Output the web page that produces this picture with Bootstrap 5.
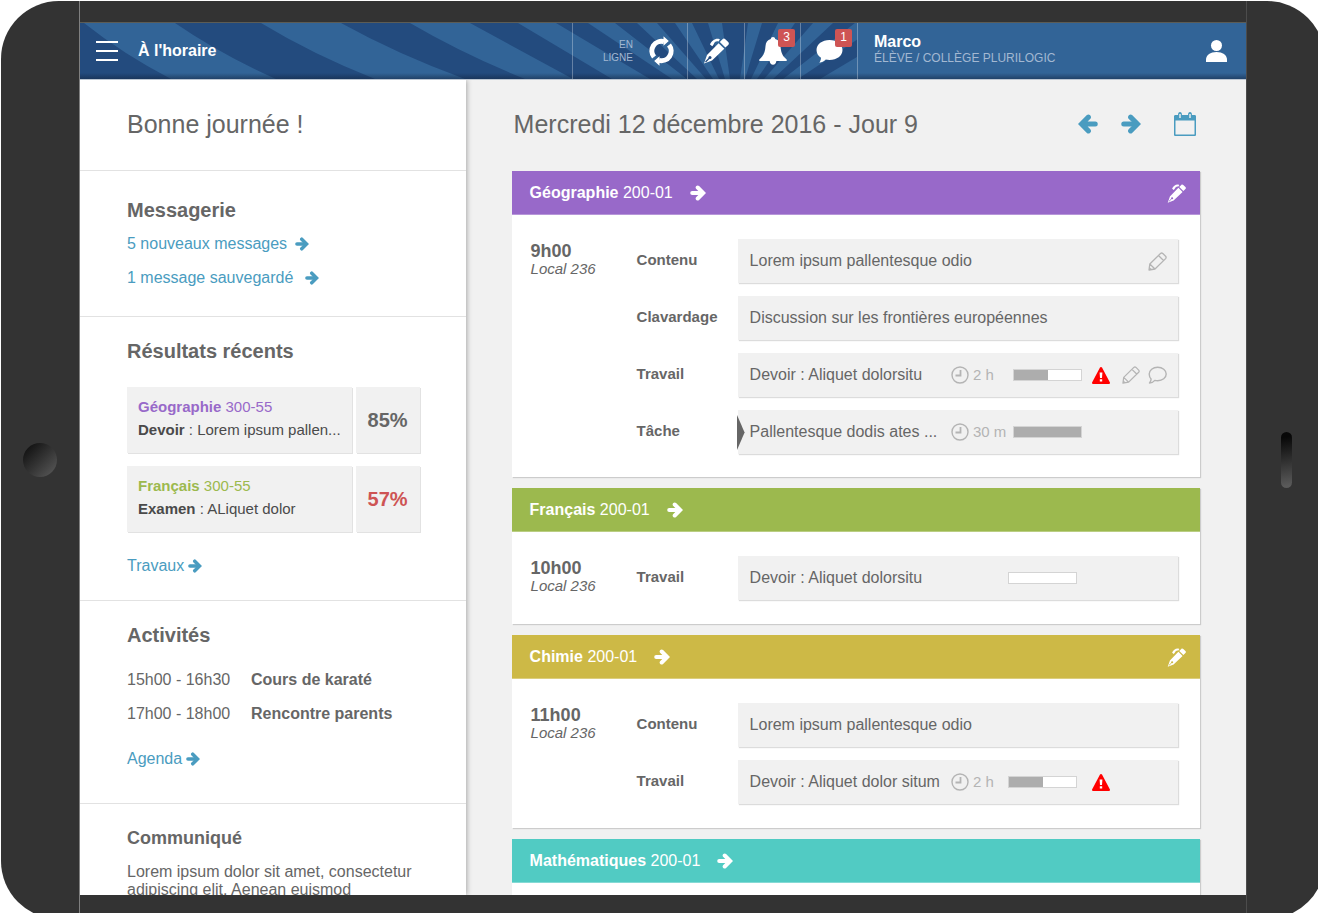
<!DOCTYPE html>
<html lang="fr">
<head>
<meta charset="utf-8">
<meta name="viewport" content="width=device-width, initial-scale=1">
<title>À l'horaire</title>
<link href="https://cdn.jsdelivr.net/npm/bootstrap@5.3.0/dist/css/bootstrap.min.css" rel="stylesheet">
<style>
  :root {
    --ink: #666;
    --accent: #4a9cc0;
    --panel: #f1f1f1;
    --line: #e2e2e2;
    --blue: #326497;
    --navy: #234b7e;
    --footshade: linear-gradient(to top, rgba(16, 32, 58, .5), transparent 6px);
  }
  body {
    font-family: "Liberation Sans", Arial, sans-serif;
    font-size: 16px;
    line-height: 24px;
    color: var(--ink);
    background: #fff;
    height: 100vh;
    overflow: hidden;
  }
  a { color: var(--accent); text-decoration: none; }
  h1, h2, h3, p { margin: 0; }
  svg { display: block; flex-shrink: 0; }

  /* Tablet frame */
  .tablet {
    height: calc(100vh + 5px);
    margin: 1px -7px 0 1px;
    background: #333;
    border-radius: 58px;
    overflow: hidden;
  }
  .bezel { flex: 0 0 78px; }
  .home-key { width: 34px; height: 34px; border-radius: 50%; background: linear-gradient(135deg, #111 10%, #585858 95%); }
  .side-key { width: 11px; height: 56px; border-radius: 6px; background: linear-gradient(170deg, #080808 10%, #5a5a5a 95%); }
  .device { border-left: 1px solid #808080; border-right: 1px solid #4c4c4c; padding: 21px 0 24px; min-width: 0; }
  .screen { border-top: 1px solid #5c5c55; background: var(--panel); min-height: 0; }

  /* Top bar */
  .topbar {
    height: 57px;
    flex-shrink: 0;
    color: #fff;
    border-bottom: 1px solid #bcc6d2;
    background:
      var(--footshade),
      url("data:image/svg+xml,%3Csvg xmlns='http://www.w3.org/2000/svg' width='1166' height='56'%3E%3Cpath fill='%23326497' d='M0 0H1166V56H0z'/%3E%3Cpath fill='%23234b7e' d='M0 0H4Q43 31 91 56H0zM95 0H181Q232 31 295 56H196Q140 31 95 0zM261 0H330Q383 31 445 56H385Q317 31 261 0zM390 0H438L532 56H493zM476 0H508L592 56H570zM535 0H557L617 56H607zM577 0H595L633 56H626zM612 0H628L645 56H639zM642 0H668L660 56H650zM682 0H698L671 56H665zM715 0H733L684 56H677zM753 0H775L703 56H693zM802 0H834L740 56H718zM872 0H920L820 56H778z'/%3E%3C/svg%3E") right top no-repeat,
      var(--navy);
  }
  .topbar button { background: none; border: 0; color: #fff; padding: 0; }
  .bar-cell { border-left: 1px solid rgba(255, 255, 255, .3) !important; }
  .status { flex: 0 0 115px; padding-right: 13px !important; gap: 16px; font-size: 10px; line-height: 13px; }
  .status span, .user small { color: #a3b8d2; }
  .tool { flex: 0 0 57px; position: relative; }
  .tool-bell { flex-basis: 56px; }
  .count {
    position: absolute; top: 6px; right: 5px; width: 17px; height: 18px;
    font-size: 12px; line-height: 17px; text-align: center; background: #ce5454; border-radius: 2px;
  }
  .user { flex: 0 0 389px; padding: 0 19px 0 16px; background: var(--footshade), var(--blue); line-height: 16px; }
  .user small { font-size: 12px; }
  .user-name { padding-bottom: 2px; }

  /* Left column */
  .aside-col { flex: 0 0 385px; background: #fff; box-shadow: 1px 0 5px rgba(0, 0, 0, .3); }
  .block { padding: 22px 46px 22px 47px; border-bottom: 1px solid var(--line); }
  .greeting { padding: 31px 47px 33px; }
  .title { font-size: 25px; line-height: 26px; font-weight: 400; }
  .block h2 { font-size: 20px; line-height: 24px; font-weight: 700; }
  .block h3 { font-size: 18px; line-height: 24px; font-weight: 700; }
  .inbox { padding-top: 27px; padding-bottom: 26px; }
  .agenda { padding-bottom: 32px; }
  .agenda .stack { padding: 21px 0; }
  .stack { display: grid; row-gap: 10px; }
  .saved { gap: 12px; }
  .tile { background: var(--panel); box-shadow: 1px 1px 0 0 #e2e2e2; height: 66px; }
  .result { font-size: 15px; line-height: 23px; gap: 4px; }
  .result + .result { margin-top: 13px; }
  .result-text { padding: 8px 11px; color: #4a4a4a; }
  .score { flex: 0 0 64px; font-size: 20px; font-weight: 700; }
  .more { margin-top: 22px; }
  .hours { flex: 0 0 124px; }
  .notice { line-height: 18px; padding-top: 13px; }

  /* Schedule */
  .day { padding: 0 46px; }
  .day-head { height: 91px; padding: 0 4px 3px 2px; }
  .day-head button { border: 0; background: none; padding: 0; color: var(--accent); }
  .next-day { margin: 0 33px 0 23px; }
  .course { background: #fff; margin-bottom: 11px; box-shadow: 1px 1px 1px #ccc; }
  .course + .course { padding-bottom: 1px; }
  .course-head { height: 44px; padding: 0 14px 0 18px; gap: 17px; color: #fff; box-shadow: inset 0 -1px rgba(255, 255, 255, .3); }
  .course-head a, .course-head button { color: #fff; background: none; border: 0; padding: 0; }
  .geo { background: #9869c9; }
  .fra { background: #9cb94e; }
  .chi { background: #cdb946; }
  .mat { background: #51cbc3; }
  .course-body { padding: 24px 22px 22px 19px; }
  .slot-time { flex: 0 0 106px; line-height: 18px; padding-top: 3px; }
  .slot-time b { font-size: 18px; }
  .slot-time i { font-size: 15px; }
  .slots { display: grid; row-gap: 12px; }
  .kind { flex: 0 0 101px; font-size: 15px; font-weight: 700; line-height: 42px; }
  .entry {
    position: relative; height: 44px; padding: 0 11px 0 12px; background: var(--panel);
    box-shadow: 1px 1px 1px #dcdcdc; display: grid; align-items: center;
    grid-template-columns: minmax(0, 1fr) auto; margin-bottom: 1px;
  }
  .entry > span:first-child { line-height: 42px; white-space: nowrap; }
  .task { grid-template-columns: minmax(0, 1fr) 62px 79px 75px; }
  .task-b { grid-template-columns: minmax(0, 1fr) 57px 84px 75px; }
  .soft { color: #b4b4b4; }
  .span-time { font-size: 15px; gap: 4px; }
  .meter { width: 69px; height: 12px; border: 1px solid #d4d4d4; border-radius: 0; background: #fff; }
  .meter .progress-bar { background: #adadad; }
  .current::before {
    content: ""; position: absolute; left: -1px; top: 4px; width: 8px; height: 37px;
    background: #666; clip-path: polygon(0 0, 100% 50%, 0 100%);
  }
</style>
</head>
<body>
<svg width="0" height="0" class="position-absolute" aria-hidden="true">
  <symbol id="arrow" viewBox="0 0 16 16">
    <path d="M2.200 8H12" fill="none" stroke="currentColor" stroke-width="4" stroke-linecap="round"/>
    <path d="M7.700 2.500 13.200 8l-5.500 5.500" fill="none" stroke="currentColor" stroke-width="4" stroke-linecap="round"/>
  </symbol>
  <symbol id="pen" viewBox="0 0 26 26">
    <path fill="currentColor" d="M19.500 1.200c1-1 2-.8 2.800 0l2.900 2.900c.9.9.9 1.900 0 2.800l-2.800 2.700-5.600-5.500zM15.600 5.200l5.700 5.600L9 22.500 1 25.500l3-8.500zM9.300 8.200 7 6.400C8.400 3 11.500.4 15.400.7l1.500.5-1.300 2.300c-2.300-.8-4.300.5-5 3z"/>
    <path stroke="var(--hole, #234b7e)" stroke-width="1.200" d="m2.500 24 4-4"/>
    <circle cx="7" cy="19.500" r="1.500" fill="var(--hole, #234b7e)"/>
  </symbol>
  <symbol id="pencil" viewBox="0 0 19 19">
    <path fill="none" stroke="currentColor" stroke-width="1.300" stroke-linejoin="round" d="M1 18l.8-6L12.500 1.500c.8-.7 1.500-.7 2.300 0l2.800 2.800c.7.800.7 1.500 0 2.300L7 17zM10.500 3.500l5 5M1.800 12l5.200 5"/>
    <path fill="currentColor" d="M1 18l.4-3 2.600 2.600z"/>
  </symbol>
  <symbol id="clock" viewBox="0 0 18 18">
    <circle cx="9" cy="9" r="8" fill="none" stroke="currentColor" stroke-width="1.400"/>
    <path d="M9.500 4v5.500H4.500" fill="none" stroke="currentColor" stroke-width="1.800"/>
  </symbol>
  <symbol id="bubble" viewBox="0 0 19 18">
    <path fill="none" stroke="currentColor" stroke-width="1.400" stroke-linejoin="round" d="M9.700 1.200c4.800 0 8.500 3 8.500 6.800s-3.700 6.800-8.500 6.800c-1 0-2-.1-2.900-.4C5.500 16 3.700 16.900 1.500 17c1-1.100 1.600-2.400 1.600-4C1.800 11.700 1.200 10 1.200 8c0-3.800 3.700-6.800 8.500-6.800z"/>
  </symbol>
  <symbol id="warn" viewBox="0 0 18 17">
    <path fill="red" d="M9 0c.5 0 .8.200 1 .600l7.800 14.600c.5 1 .1 1.800-1 1.800H1.200c-1.100 0-1.500-.8-1-1.800L8 .6C8.200.2 8.500 0 9 0z"/>
    <path fill="#fff" d="M7.600 5.500h2.800L10 11H8zM7.800 12.300h2.400v2.300H7.800z"/>
  </symbol>
</svg>

<div class="tablet d-flex">
  <div class="bezel d-flex align-items-center justify-content-center"><div class="home-key"></div></div>

  <div class="device flex-grow-1 d-flex flex-column">
    <div class="screen flex-grow-1 d-flex flex-column overflow-hidden">

      <header class="topbar d-flex">
        <div class="d-flex align-items-center flex-grow-1 ps-3">
          <button type="button" aria-label="Menu">
            <svg width="22" height="22" viewBox="0 0 22 22"><path stroke="#fff" stroke-width="2" d="M0 2h22M0 11h22M0 20h22"/></svg>
          </button>
          <b class="ps-3 ms-1">À l'horaire</b>
        </div>
        <button type="button" class="bar-cell status d-flex align-items-center justify-content-end text-end">
          <span>EN<br>LIGNE</span>
          <svg width="25" height="30" viewBox="0 0 25 30">
            <g fill="none" stroke="#fff" stroke-width="5">
              <path d="M5 21A9.600 9.600 0 0 1 15 5.700"/>
              <path d="M20 9A9.600 9.600 0 0 1 10 24.300"/>
            </g>
            <path fill="#fff" d="M14.500.3l5.300 4.700-5.300 4.800zM10.500 29.700 5.200 25l5.300-4.800z"/>
          </svg>
        </button>
        <button type="button" class="bar-cell tool d-flex align-items-center justify-content-center" aria-label="Écrire">
          <svg width="26" height="26"><use href="#pen"/></svg>
        </button>
        <button type="button" class="bar-cell tool tool-bell d-flex align-items-center justify-content-center" aria-label="Alertes">
          <svg width="28" height="28" viewBox="0 0 28 28"><path fill="#fff" d="M14 0c1.300 0 2.100.8 2.200 2 3.500.9 5 3.600 5.300 7 .4 6 1.600 9.800 6.200 13.500V24H17.400c-.3 2.300-1.600 3.700-3.400 3.700S10.900 26.300 10.600 24H.3v-1.500C4.900 18.800 6.100 15 6.500 9c.3-3.400 1.800-6.100 5.300-7C11.900.8 12.700 0 14 0z"/></svg>
          <span class="count">3</span>
        </button>
        <button type="button" class="bar-cell tool d-flex align-items-center justify-content-center" aria-label="Messages">
          <svg width="27" height="23" viewBox="0 0 27 23"><path fill="#fff" d="M13.500 0C20.800 0 26.500 4.300 26.500 10S20.800 20 13.500 20c-1.300 0-2.500-.1-3.700-.4C7.800 21.500 6 22.400 3.300 22.700c1-1.300 1.600-2.700 1.700-4.900C2.200 16 .5 13.200.5 10 .5 4.300 6.200 0 13.500 0z"/></svg>
          <span class="count">1</span>
        </button>
        <div class="bar-cell user d-flex align-items-center justify-content-between">
          <div class="user-name">
            <b class="d-block">Marco</b>
            <small class="d-block">ÉLÈVE / COLLÈGE PLURILOGIC</small>
          </div>
          <button type="button" aria-label="Profil">
            <svg width="21" height="22" viewBox="0 0 21 22"><circle cx="10.500" cy="5.500" r="5.500" fill="#fff"/><path fill="#fff" d="M0 22v-2.500C0 15 4.500 12 10.500 12S21 15 21 19.500V22z"/></svg>
          </button>
        </div>
      </header>

      <div class="d-flex flex-grow-1 overflow-hidden">
        <aside class="aside-col">
          <section class="block greeting"><h1 class="title">Bonne journée !</h1></section>

          <section class="block inbox stack">
            <h2>Messagerie</h2>
            <a href="#" class="d-flex align-items-center gap-2">5 nouveaux messages<svg width="14" height="14"><use href="#arrow"/></svg></a>
            <a href="#" class="saved d-flex align-items-center">1 message sauvegardé<svg width="14" height="14"><use href="#arrow"/></svg></a>
          </section>

          <section class="block">
            <h2 class="mb-4">Résultats récents</h2>
            <div class="result d-flex">
              <div class="tile result-text flex-grow-1 text-truncate">
                <div style="color:#9869c9"><b>Géographie</b> 300-55</div>
                <div><b>Devoir</b> : Lorem ipsum pallen...</div>
              </div>
              <div class="tile score d-flex align-items-center justify-content-center">85%</div>
            </div>
            <div class="result d-flex">
              <div class="tile result-text flex-grow-1 text-truncate">
                <div style="color:#9cb94e"><b>Français</b> 300-55</div>
                <div><b>Examen</b> : ALiquet dolor</div>
              </div>
              <div class="tile score d-flex align-items-center justify-content-center" style="color:#ce5454">57%</div>
            </div>
            <a href="#" class="more d-flex align-items-center gap-1">Travaux<svg width="14" height="14"><use href="#arrow"/></svg></a>
          </section>

          <section class="block agenda">
            <h2>Activités</h2>
            <div class="stack">
              <div class="d-flex"><span class="hours">15h00 - 16h30</span><b>Cours de karaté</b></div>
              <div class="d-flex"><span class="hours">17h00 - 18h00</span><b>Rencontre parents</b></div>
            </div>
            <a href="#" class="d-flex align-items-center gap-1">Agenda<svg width="14" height="14"><use href="#arrow"/></svg></a>
          </section>

          <section class="block">
            <h3>Communiqué</h3>
            <p class="notice">Lorem ipsum dolor sit amet, consectetur adipiscing elit. Aenean euismod</p>
          </section>
        </aside>

        <main class="day flex-grow-1">
          <div class="day-head d-flex align-items-center">
            <h1 class="title flex-grow-1">Mercredi 12 décembre 2016 - Jour 9</h1>
            <button type="button" aria-label="Jour précédent"><svg width="20" height="20" viewBox="0 0 16 16"><path d="M13.800 8H4M8.300 2.500 2.800 8l5.500 5.500" fill="none" stroke="currentColor" stroke-width="4" stroke-linecap="round"/></svg></button>
            <button type="button" class="next-day" aria-label="Jour suivant"><svg width="20" height="20"><use href="#arrow"/></svg></button>
            <button type="button" aria-label="Calendrier">
              <svg width="22" height="24" viewBox="0 0 22 24"><path fill="currentColor" fill-rule="evenodd" d="M1.500 3H4c0-2 .8-3 2-3s2 1 2 3h6c0-2 .8-3 2-3s2 1 2 3h2.500c1 0 1.500.5 1.500 1.500v18c0 1-.5 1.500-1.500 1.500h-19C.5 24 0 23.500 0 22.500v-18C0 3.500.5 3 1.500 3zM1.500 8.500v14h19v-14zM5.300 2v4h1.400V2zm10 0v4h1.400V2z"/></svg>
            </button>
          </div>

          <article class="course">
            <div class="course-head geo d-flex align-items-center">
              <span><b>Géographie</b> 200-01</span>
              <a href="#" aria-label="Ouvrir Géographie"><svg width="16" height="16"><use href="#arrow"/></svg></a>
              <button type="button" class="ms-auto" aria-label="Modifier" style="--hole:#9869c9"><svg width="19" height="19"><use href="#pen"/></svg></button>
            </div>
            <div class="course-body d-flex">
              <div class="slot-time"><b class="d-block">9h00</b><i>Local 236</i></div>
              <div class="slots flex-grow-1">
                <div class="d-flex"><span class="kind">Contenu</span>
                  <div class="entry flex-grow-1"><span>Lorem ipsum pallentesque odio</span><svg class="soft" width="19" height="19"><use href="#pencil"/></svg></div></div>
                <div class="d-flex"><span class="kind">Clavardage</span>
                  <div class="entry flex-grow-1"><span>Discussion sur les frontières européennes</span></div></div>
                <div class="d-flex"><span class="kind">Travail</span>
                  <div class="entry task flex-grow-1"><span>Devoir : Aliquet dolorsitu</span>
                    <span class="soft span-time d-flex align-items-center"><svg width="18" height="18"><use href="#clock"/></svg>2 h</span>
                    <div class="progress meter" role="progressbar" aria-label="Progression" aria-valuenow="50"><div class="progress-bar" style="width:50%"></div></div>
                    <div class="d-flex align-items-center gap-2 soft"><svg class="me-1" width="18" height="17"><use href="#warn"/></svg><svg width="18" height="18"><use href="#pencil"/></svg><svg width="19" height="18"><use href="#bubble"/></svg></div>
                  </div></div>
                <div class="d-flex"><span class="kind">Tâche</span>
                  <div class="entry task current flex-grow-1"><span>Pallentesque dodis ates ...</span>
                    <span class="soft span-time d-flex align-items-center"><svg width="18" height="18"><use href="#clock"/></svg>30 m</span>
                    <div class="progress meter" role="progressbar" aria-label="Progression" aria-valuenow="100"><div class="progress-bar" style="width:100%"></div></div>
                  </div></div>
              </div>
            </div>
          </article>

          <article class="course">
            <div class="course-head fra d-flex align-items-center">
              <span><b>Français</b> 200-01</span>
              <a href="#" aria-label="Ouvrir Français"><svg width="16" height="16"><use href="#arrow"/></svg></a>
            </div>
            <div class="course-body d-flex">
              <div class="slot-time"><b class="d-block">10h00</b><i>Local 236</i></div>
              <div class="slots flex-grow-1">
                <div class="d-flex"><span class="kind">Travail</span>
                  <div class="entry task-b flex-grow-1"><span>Devoir : Aliquet dolorsitu</span><span></span>
                    <div class="progress meter" role="progressbar" aria-label="Progression" aria-valuenow="0"></div>
                  </div></div>
              </div>
            </div>
          </article>

          <article class="course">
            <div class="course-head chi d-flex align-items-center">
              <span><b>Chimie</b> 200-01</span>
              <a href="#" aria-label="Ouvrir Chimie"><svg width="16" height="16"><use href="#arrow"/></svg></a>
              <button type="button" class="ms-auto" aria-label="Modifier" style="--hole:#cdb946"><svg width="19" height="19"><use href="#pen"/></svg></button>
            </div>
            <div class="course-body d-flex">
              <div class="slot-time"><b class="d-block">11h00</b><i>Local 236</i></div>
              <div class="slots flex-grow-1">
                <div class="d-flex"><span class="kind">Contenu</span>
                  <div class="entry flex-grow-1"><span>Lorem ipsum pallentesque odio</span></div></div>
                <div class="d-flex"><span class="kind">Travail</span>
                  <div class="entry task-b flex-grow-1"><span>Devoir : Aliquet dolor situm</span>
                    <span class="soft span-time d-flex align-items-center"><svg width="18" height="18"><use href="#clock"/></svg>2 h</span>
                    <div class="progress meter" role="progressbar" aria-label="Progression" aria-valuenow="50"><div class="progress-bar" style="width:50%"></div></div>
                    <svg width="18" height="17"><use href="#warn"/></svg>
                  </div></div>
              </div>
            </div>
          </article>

          <article class="course">
            <div class="course-head mat d-flex align-items-center">
              <span><b>Mathématiques</b> 200-01</span>
              <a href="#" aria-label="Ouvrir Mathématiques"><svg width="16" height="16"><use href="#arrow"/></svg></a>
            </div>
            <div class="course-body"></div>
          </article>
        </main>
      </div>
    </div>
  </div>

  <div class="bezel d-flex align-items-center justify-content-center"><div class="side-key"></div></div>
</div>
<script src="https://cdn.jsdelivr.net/npm/bootstrap@5.3.0/dist/js/bootstrap.bundle.min.js"></script>
</body>
</html>
